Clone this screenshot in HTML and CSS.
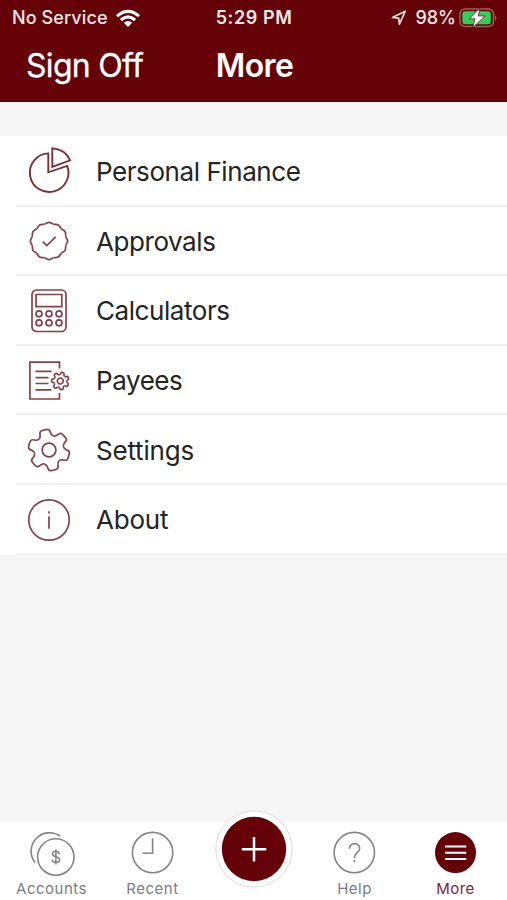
FILE: index.html
```html
<!DOCTYPE html>
<html lang="en">
<head>
<meta charset="utf-8">
<title>More</title>
<link rel="stylesheet" href="styles.css">
</head>
<body>
<svg class="defs" width="0" height="0" aria-hidden="true">
  <defs>
    <path id="tooth" d="M-7.4-12.8C-6-13.6-5.4-14.3-5.3-16.8C-5.2-19.6-4.6-20.3-3-20.4Q0-20.9 3-20.4C4.6-20.3 5.2-19.6 5.3-16.8C5.4-14.3 6-13.6 7.4-12.8"/>
    <path id="cog" d="M-2.75-5.7C-2.1-6-1.9-6.3-1.8-7.2C-1.7-8.4-1.4-8.7-.8-8.7L.8-8.7C1.4-8.7 1.7-8.4 1.8-7.2C1.9-6.3 2.1-6 2.75-5.7"/>
    <path id="scallop" d="M-4.5-16.8C-2.7-17.3-1.8-18.6 0-18.6S2.7-17.3 4.5-16.8"/>
  </defs>
</svg>
<div class="app">
  <header class="header">
    <div class="status">
      <div class="carrier"><span>No Service</span>
        <svg width="26" height="20" viewBox="0 0 26 20"><g fill="none" stroke="#fff" stroke-width="3.1"><path d="M2 8.1Q13-1.5 24 8.1"/><path d="M5.9 12Q13 5.7 20.1 12"/></g><path d="M8.8 14.8Q13 11.4 17.2 14.8L13 19Z" fill="#fff"/></svg>
      </div>
      <span class="time">5:29 PM</span>
      <div class="power">
        <svg width="16" height="16" viewBox="0 0 16 16"><path d="M1.5 7.5L14.2 1.3L8.4 14.2L7.6 8.2Z" fill="none" stroke="#f1dcdc" stroke-width="1.7" stroke-linejoin="round"/></svg>
        <span>98%</span>
        <svg class="battery" width="39" height="20" viewBox="0 0 39 20"><rect x="1" y="1" width="33.5" height="17.5" rx="5" fill="none" stroke="#9a6259" stroke-width="1.5"/><path d="M36 7Q39 9.8 36 12.6Z" fill="#9a6259"/><rect x="3.3" y="3.3" width="28.5" height="13" rx="3" fill="#31cf58"/><path d="M20.7 .3L10 10.8H16L13.8 19.5L26 8H19.3Z" fill="#fff" stroke="#5b0004" stroke-width=".7"/></svg>
      </div>
    </div>
    <nav class="navbar"><a class="signoff">Sign Off</a><h1>More</h1></nav>
  </header>
  <main>
    <ul class="menu">
      <li><svg class="icon bold" viewBox="0 0 44 44"><path d="M21.3 3.4A19.3 19.3 0 1 0 40.2 15.9L21.3 22.3Z"/><path d="M25.3-1.8V16.8L43.2 10.3Q38-.9 25.3-1.8Z"/></svg><span>Personal Finance</span></li>
      <li><svg class="icon" viewBox="-22 -22 44 44"><use href="#scallop"/><use href="#scallop" transform="rotate(30)"/><use href="#scallop" transform="rotate(60)"/><use href="#scallop" transform="rotate(90)"/><use href="#scallop" transform="rotate(120)"/><use href="#scallop" transform="rotate(150)"/><use href="#scallop" transform="rotate(180)"/><use href="#scallop" transform="rotate(210)"/><use href="#scallop" transform="rotate(240)"/><use href="#scallop" transform="rotate(270)"/><use href="#scallop" transform="rotate(300)"/><use href="#scallop" transform="rotate(330)"/><path d="M-6.3 .6L-2.2 4.6L6.6-4.2"/></svg><span>Approvals</span></li>
      <li><svg class="icon" viewBox="0 0 44 44"><rect x="5" y="1" width="34" height="41.5" rx="4.5"/><path d="M9 5.5H34.8V17.6H9Z"/><circle cx="12" cy="24.8" r="3"/><circle cx="22" cy="24.8" r="3"/><circle cx="32" cy="24.8" r="3"/><circle cx="12" cy="33.8" r="3"/><circle cx="22" cy="33.8" r="3"/><circle cx="32" cy="33.8" r="3"/></svg><span>Calculators</span></li>
      <li><svg class="icon" viewBox="0 0 44 44"><path d="M32.5 9.5V3.2H2.9V40H32.5V34M8.5 12.3H24.5M8.5 18.6H21.5M8.5 24.5H21.5M8.5 30.8H24.5"/><g transform="translate(33.3 22) rotate(16)"><use href="#cog"/><use href="#cog" transform="rotate(51.43)"/><use href="#cog" transform="rotate(102.86)"/><use href="#cog" transform="rotate(154.29)"/><use href="#cog" transform="rotate(205.71)"/><use href="#cog" transform="rotate(257.14)"/><use href="#cog" transform="rotate(308.57)"/><circle r="3"/></g></svg><span>Payees</span></li>
      <li><svg class="icon" viewBox="-22 -22 44 44"><g transform="rotate(-13)"><use href="#tooth"/><use href="#tooth" transform="rotate(60)"/><use href="#tooth" transform="rotate(120)"/><use href="#tooth" transform="rotate(180)"/><use href="#tooth" transform="rotate(240)"/><use href="#tooth" transform="rotate(300)"/></g><circle r="6.9"/></svg><span class="loose">Settings</span></li>
      <li><svg class="icon" viewBox="-22 -22 44 44"><circle r="20.2"/><path d="M0-3.7V8.7M0-8.8V-6.5"/></svg><span class="loose">About</span></li>
    </ul>
  </main>
  <footer class="tabs">
    <a class="tab"><svg viewBox="0 0 50 50"><path d="M9 34.5A18.4 18.4 0 0 1 34.2 8.2"/><circle cx="29.8" cy="29" r="18.2"/><path d="M33.4 26C33 23.9 31.8 23.2 29.9 23.2C25.3 23.2 25.5 28 29.9 28.8C35 29.8 34.7 34.6 29.9 34.6C27.7 34.6 26.4 33.6 26 31.7M29.9 21.4V36.4"/></svg><span>Accounts</span></a>
    <a class="tab"><svg viewBox="0 0 50 50"><circle cx="25.6" cy="24.6" r="20.2"/><path d="M25.6 10.3V25.2H15.6"/></svg><span>Recent</span></a>
    <a class="add"><svg viewBox="0 0 78 78"><circle cx="39" cy="39" r="38.2" fill="#fff" stroke="#dcdcdc"/><circle cx="39" cy="39" r="32.2" fill="#650207"/><path d="M39 27V51.5M26.8 39.2H51.3" stroke="#fff" stroke-width="2.5"/></svg></a>
    <a class="tab"><svg viewBox="0 0 50 50"><circle cx="25.3" cy="24.6" r="20.2"/><path d="M20.5 20.8C20.5 13.9 30.7 14 30.7 20.4C30.7 24.6 25.4 24.5 25.4 30.2M25.4 32V34.3"/></svg><span>Help</span></a>
    <a class="tab active"><svg viewBox="0 0 50 50"><circle cx="25.5" cy="24.6" r="20.5" fill="#650207" stroke="none"/><path d="M15.2 18.5H36.3M15.2 24.7H36.3M15.2 31H36.3" stroke="#fff" stroke-width="2.1"/></svg><span>More</span></a>
  </footer>
</div>
</body>
</html>
```
FILE: styles.css
```css
* { box-sizing: border-box; }
body { margin: 0; font-family: Inter, "Liberation Sans", sans-serif; }
.defs { position: absolute; }
.app { width: 507px; height: 900px; display: flex; flex-direction: column; background: #f6f6f6; overflow: hidden; }
.header { height: 102px; background: #650207; color: #fff; border-bottom: 1px solid #4f0004; }
.status { height: 35px; display: grid; grid-template-columns: 1fr auto 1fr; align-items: center; padding: 0 9px 0 12px; color: #f7e9e9; font-size: 18px; font-weight: 500; line-height: 34px; }
.carrier, .power { display: flex; align-items: center; height: 34px; }
.carrier { gap: 7px; letter-spacing: .1px; }
.power { justify-content: flex-end; gap: 8px; }
.power .battery { margin-left: -5px; }
.time { font-weight: 600; letter-spacing: .6px; margin-left: -2px; }
.navbar { height: 60px; display: grid; grid-template-columns: 1fr auto 1fr; align-items: center; padding: 0 26px; }
.signoff { font-size: 32px; letter-spacing: -.7px; -webkit-text-stroke: .3px #fff; }
h1 { margin: 0 -1px 0 1px; font-size: 32px; font-weight: 600; letter-spacing: -.6px; }
main { flex: 1; padding-top: 34px; }
.menu { list-style: none; margin: 0; padding: 1px 0 0 16px; background: #fff; }
.menu li { height: 69.6px; display: flex; align-items: center; gap: 26px; padding-left: 10px; padding-top: 2px; border-bottom: 2px solid #f1f1f2; font-size: 26px; letter-spacing: -.43px; color: #242424; }
.menu .loose { letter-spacing: -.2px; }
.icon { width: 44px; height: 44px; margin: 0 -.5px 0 .5px; overflow: visible; fill: none; stroke: #85424a; stroke-width: 1.7; }
.bold { stroke: #7c3038; stroke-width: 1.9; }
.tabs { height: 78px; display: grid; grid-template-columns: repeat(5, 101px); background: #fff; }
.tab { display: flex; flex-direction: column; align-items: center; padding-top: 6px; color: #7c7c7c; font-size: 15px; line-height: 21px; letter-spacing: .5px; }
.tab span { padding-left: 2px; }
.tab svg { width: 50px; height: 50px; overflow: visible; fill: none; stroke: #858585; stroke-width: 1.6; }
.tab.active { color: #742933; }
.add { display: flex; justify-content: center; margin: -12px -2px 0 0; }
.add svg { width: 78px; height: 78px; flex: none; }
```
